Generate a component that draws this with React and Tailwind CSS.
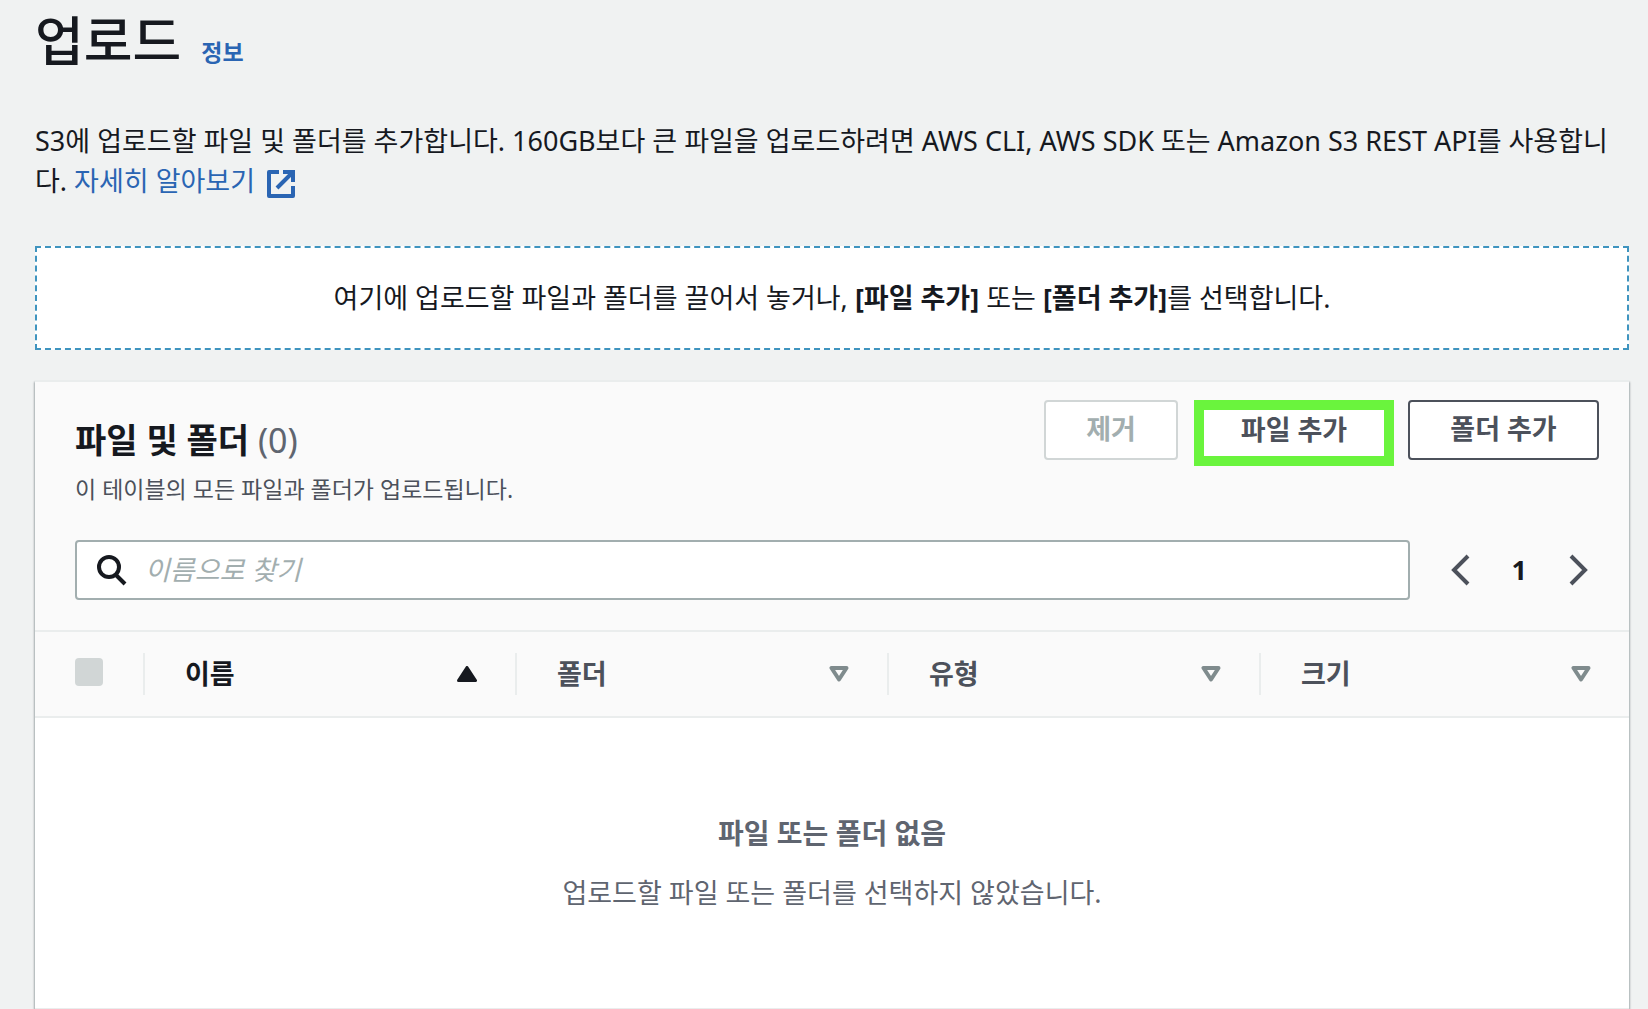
import React, { useState } from 'react';

const columns = [
  { key: 'name', label: '이름', width: 'w-[372px]', sorted: true },
  { key: 'folder', label: '폴더', width: 'w-[372px]' },
  { key: 'type', label: '유형', width: 'w-[372px]' },
  { key: 'size', label: '크기', width: '' },
];

const ExternalIcon = () => (
  <svg className="inline-block size-7 ml-3 align-[-7px]" viewBox="0 0 28 28" fill="none" stroke="currentColor" strokeWidth="4">
    <path d="M12 2H2v24h24V16" strokeLinejoin="round" />
    <path d="M16 2h10v10M26 2L10 18" />
  </svg>
);

const SearchIcon = () => (
  <svg className="size-8 shrink-0" viewBox="0 0 32 32" fill="none" stroke="currentColor" strokeWidth="4">
    <circle cx="12" cy="13" r="10" />
    <path d="M19 21l9 9" />
  </svg>
);

const SortIcon = ({ sorted }) =>
  sorted ? (
    <svg className="w-5 h-4 text-[#16191f]" viewBox="0 0 20 16" fill="currentColor" stroke="currentColor" strokeWidth="3" strokeLinejoin="round">
      <path d="M10 1.5L18.5 14.5h-17z" />
    </svg>
  ) : (
    <svg className="w-5 h-4 text-[#7f8b8d]" viewBox="0 0 20 16" fill="none" stroke="currentColor" strokeWidth="4" strokeLinejoin="round">
      <path d="M2.5 2h15L10 13.5z" />
    </svg>
  );

const Chevron = ({ d }) => (
  <svg className="w-5 h-8" viewBox="0 0 20 32" fill="none" stroke="currentColor" strokeWidth="4">
    <path d={d} />
  </svg>
);

const App = () => {
  const [query, setQuery] = useState('');

  return (
    <div className="min-h-screen bg-[#f0f2f2] pl-[35px] pr-[19px] font-['Noto_Sans','Noto_Sans_CJK_KR',sans-serif] text-[27px] leading-10 text-[#16191f]">
      {/* Page heading */}
      <header className="flex items-baseline gap-5 pt-[5px]">
        <h1 className="text-[53px] leading-[72px] font-medium">업로드</h1>
        <a href="#info" className="text-[23px] font-bold text-[#2a65b3]">정보</a>
      </header>

      <p className="mt-11 break-all">
        S3에 업로드할 파일 및 폴더를 추가합니다. 160GB보다 큰 파일을 업로드하려면 AWS CLI, AWS SDK 또는 Amazon S3 REST API를 사용합니다.{' '}
        <a href="#learn-more" className="text-[#2a65b3]">
          자세히 알아보기
          <ExternalIcon />
        </a>
      </p>

      {/* Drop zone */}
      <div className="mt-[45px] border-2 border-dashed border-[#3f94bf] bg-white py-[30px] text-center">
        여기에 업로드할 파일과 폴더를 끌어서 놓거나, <b>[파일 추가]</b> 또는 <b>[폴더 추가]</b>를 선택합니다.
      </div>

      {/* Files and folders */}
      <section className="mt-[30px] border-t-2 border-[#eaeded] bg-white shadow-[0_2px_2px_0_rgba(0,28,36,0.3),1px_2px_2px_0_rgba(0,28,36,0.2),-1px_2px_2px_0_rgba(0,28,36,0.2)]">
        <div className="bg-[#fafafa] pl-10 pr-[30px] pt-[18px] pb-[30px]">
          <div className="flex items-start justify-between">
            <div className="pt-[18px]">
              <h2 className="text-[34px] leading-[44px] font-bold">
                파일 및 폴더 <span className="font-normal text-[#5f6570]">(0)</span>
              </h2>
              <p className="mt-[11px] text-[23px] leading-8 text-[#4c515b]">이 테이블의 모든 파일과 폴더가 업로드됩니다.</p>
            </div>
            <div className="flex items-start font-bold text-[#4c515b]">
              <button type="button" disabled className="h-[60px] w-[134px] rounded-sm border-2 border-[#d1d6d6] bg-white pb-0.5 text-[#a2aeaf]">제거</button>
              <button type="button" className="ml-4 h-[66px] w-[200px] border-10 border-[#6af43d] bg-white pb-2">파일 추가</button>
              <button type="button" className="ml-3.5 h-[60px] w-[191px] rounded-sm border-2 border-[#4c515b] bg-white pb-0.5">폴더 추가</button>
            </div>
          </div>

          <div className="mt-[35px] flex items-center">
            <label className="flex h-[60px] flex-1 items-center gap-4 rounded-sm border-2 border-[#a2aeaf] bg-white pl-5">
              <SearchIcon />
              <input
                type="text"
                aria-label="이름으로 찾기"
                placeholder="이름으로 찾기"
                value={query}
                onChange={(e) => setQuery(e.target.value)}
                className="min-w-0 flex-1 bg-transparent outline-none placeholder:italic placeholder:text-[#a2aeaf]"
              />
            </label>
            <nav className="ml-10 mr-2.5 flex items-center gap-[42px] text-[#4c515b]">
              <button type="button" aria-label="이전 페이지"><Chevron d="M18 2L4 16l14 14" /></button>
              <button type="button" aria-current="page" className="font-bold text-[#16191f]">1</button>
              <button type="button" aria-label="다음 페이지"><Chevron d="M2 2l14 14L2 30" /></button>
            </nav>
          </div>
        </div>

        <table className="w-full table-fixed">
          <thead>
            <tr className="border-y-2 border-[#eaeded] bg-[#fafafa]">
              <th className="w-[110px] py-[21px]">
                <div className="flex h-[42px] items-center border-r-2 border-[#eaeded] pl-10 pb-1">
                  <input type="checkbox" disabled aria-label="모두 선택" className="size-7 appearance-none rounded-sm bg-[#d1d6d6]" />
                </div>
              </th>
              {columns.map((col, i) => (
                <th key={col.key} className={`${col.width} py-[21px] text-left ${col.sorted ? '' : 'text-[#4c515b]'}`}>
                  <button
                    type="button"
                    className={`flex h-[42px] w-full items-center justify-between border-[#eaeded] pl-10 pr-[38px] font-bold ${i < columns.length - 1 ? 'border-r-2' : ''}`}
                  >
                    {col.label}
                    <SortIcon sorted={col.sorted} />
                  </button>
                </th>
              ))}
            </tr>
          </thead>
          <tbody>
            <tr className="border-b-2 border-[#eaeded]">
              <td colSpan={5} className="pt-[95px] pb-[95px] text-center text-[#5f6570]">
                <p className="text-[28px] font-bold">파일 또는 폴더 없음</p>
                <p className="mt-5">업로드할 파일 또는 폴더를 선택하지 않았습니다.</p>
              </td>
            </tr>
          </tbody>
        </table>
      </section>
    </div>
  );
};

export default App;
